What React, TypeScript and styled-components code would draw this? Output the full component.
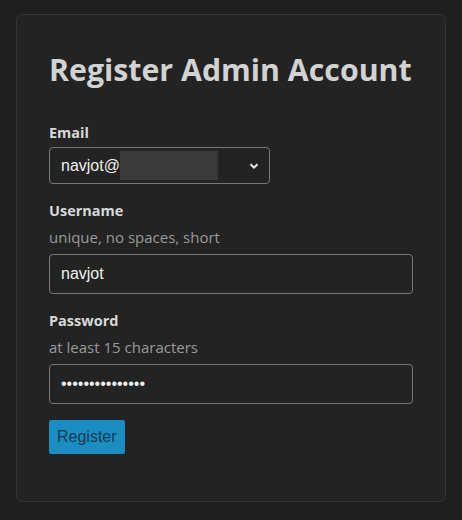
import React from 'react'
import styled, { createGlobalStyle } from 'styled-components'

const GlobalStyle = createGlobalStyle`
  html, body {
    margin: 0;
    background: #1f1f1f;
  }
`

const Page = styled.div`
  padding: 14px 16px 18px 16px;
  min-height: 520px;
  box-sizing: border-box;
`

const Card = styled.form`
  border: 1px solid #343434;
  border-radius: 6px;
  background: #232323;
  padding: 35px 32px 47px 32px;
  font-family: 'Open Sans', 'Liberation Sans', sans-serif;
`

const Title = styled.h1`
  margin: 0 0 33px 0;
  font-size: 30.3px;
  line-height: 40px;
  font-weight: 700;
  color: #d2d2d2;
`

const Field = styled.div`
  display: flex;
  flex-direction: column;
  margin-bottom: 17px;
`

const Label = styled.label`
  font-size: 14.5px;
  font-weight: 700;
  color: #d8d8d8;
  line-height: 20px;
  margin-bottom: 4px;
`

const Hint = styled.div`
  font-size: 15px;
  color: #9a9a9a;
  line-height: 20px;
  margin: 2px 0 7px 0;
`

const FakeSelect = styled.div`
  display: flex;
  align-items: center;
  box-sizing: border-box;
  width: 221px;
  height: 37px;
  padding: 0 10px 0 11px;
  border: 1px solid #777;
  border-radius: 4px;
  font-family: 'Liberation Sans', Arial, sans-serif;
  font-size: 16px;
  color: #f0f0f0;
`

const Redacted = styled.span`
  display: inline-block;
  width: 98px;
  height: 29px;
  background: #3a3a3a;
`

const Chevron = styled.svg`
  margin-left: auto;
  width: 10px;
  height: 10px;
`

const TextInput = styled.input`
  box-sizing: border-box;
  width: 100%;
  height: 40px;
  padding: 0 11px;
  border: 1px solid #777;
  border-radius: 4px;
  background: transparent;
  font-family: 'Liberation Sans', Arial, sans-serif;
  font-size: 16px;
  color: #f0f0f0;
  outline: none;
`

const SubmitButton = styled.button`
  margin-top: -1px;
  height: 34px;
  padding: 0 8px;
  border: none;
  border-radius: 2px;
  background: #1a8ec2;
  color: #173a50;
  font-family: 'Liberation Sans', Arial, sans-serif;
  font-size: 16px;
  cursor: pointer;
`

const App: React.FC = () => (
  <Page>
    <GlobalStyle />
    <Card onSubmit={(e) => e.preventDefault()}>
      <Title>Register Admin Account</Title>
      <Field>
        <Label>Email</Label>
        <FakeSelect>
          navjot@
          <Redacted />
          <Chevron viewBox="0 0 10 10">
            <path d="M1.5 3.2 L5 6.7 L8.5 3.2" fill="none" stroke="#e8e8e8" strokeWidth="2" />
          </Chevron>
        </FakeSelect>
      </Field>
      <Field>
        <Label>Username</Label>
        <Hint>unique, no spaces, short</Hint>
        <TextInput type="text" defaultValue="navjot" />
      </Field>
      <Field>
        <Label>Password</Label>
        <Hint>at least 15 characters</Hint>
        <TextInput type="password" defaultValue="abcdefghijklmno" />
      </Field>
      <SubmitButton type="submit">Register</SubmitButton>
    </Card>
  </Page>
)

export default App
